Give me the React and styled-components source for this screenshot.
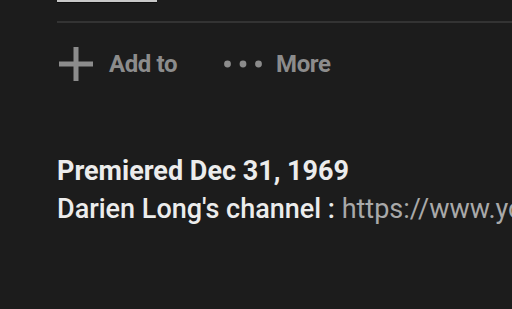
import React from "react";
import styled, { createGlobalStyle } from "styled-components";

const Global = createGlobalStyle`
  html, body { margin: 0; padding: 0; background: #1c1c1c; overflow: hidden; }
  body { font-family: Roboto, "Liberation Sans", Arial, sans-serif; }
`;

const Page = styled.div`
  width: 512px;
  height: 309px;
  background: #1c1c1c;
  padding-left: 57px;
  box-sizing: border-box;
  overflow: hidden;
`;

const TopTab = styled.div`
  width: 100px;
  height: 2px;
  background: #c8c8c8;
  border-bottom: 1px solid #0e0e0e;
`;

const Divider = styled.div`
  margin-top: 18px;
  height: 2px;
  background: #333333;
`;

const Actions = styled.div`
  display: flex;
  align-items: center;
  height: 40px;
  margin-top: 21px;
  gap: 46px;
`;

const Action = styled.div`
  display: flex;
  align-items: center;
  gap: ${(p) => p.$gap}px;
  color: #8c8c8c;
  font-size: 24px;
  font-weight: 700;
  letter-spacing: -0.4px;
`;

const Desc = styled.div`
  margin-top: 68px;
  font-size: 27px;
  line-height: 38px;
  white-space: nowrap;
`;

const Strong = styled.div`
  color: #ececec;
  font-weight: 700;
`;

const Line = styled.div`
  color: #ececec;
  font-weight: 500;
`;

const Link = styled.span`
  color: #a9a9a9;
  font-weight: 400;
`;

const PlusIcon = () => (
  <svg width="38" height="38" viewBox="0 0 38 38">
    <path d="M19 2V36M2 19H36" stroke="#8c8c8c" strokeWidth="5" />
  </svg>
);

const DotsIcon = () => (
  <svg width="40" height="10" viewBox="0 0 40 10">
    <circle cx="4.5" cy="5" r="3.4" fill="#8c8c8c" />
    <circle cx="20" cy="5" r="3.4" fill="#8c8c8c" />
    <circle cx="35.5" cy="5" r="3.4" fill="#8c8c8c" />
  </svg>
);

export default function App() {
  return (
    <Page>
      <Global />
      <TopTab />
      <Divider />
      <Actions>
        <Action $gap={14}>
          <PlusIcon />
          <span>Add to</span>
        </Action>
        <Action $gap={13}>
          <DotsIcon />
          <span>More</span>
        </Action>
      </Actions>
      <Desc>
        <Strong>Premiered Dec 31, 1969</Strong>
        <Line>
          Darien Long's channel : <Link>https://www.youtube.com/channel/UC</Link>
        </Line>
      </Desc>
    </Page>
  );
}
